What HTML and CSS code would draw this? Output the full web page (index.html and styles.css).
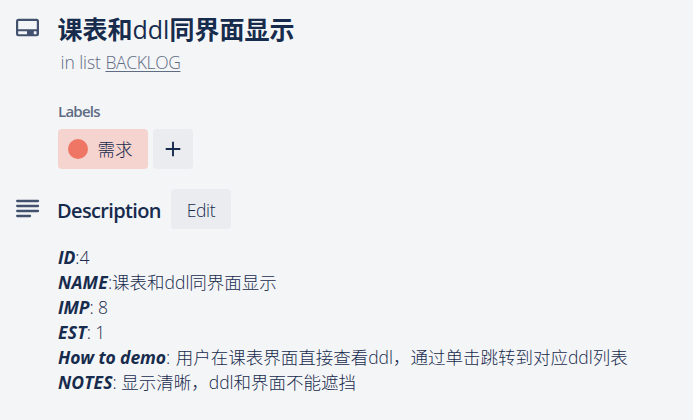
FILE: index.html
```
<!DOCTYPE html>
<html lang="zh-CN">
<head>
<meta charset="utf-8">
<title>课表和ddl同界面显示</title>
<link rel="stylesheet" href="styles.css">
</head>
<body>
<main class="card">
  <header class="card-header">
    <svg class="icon" width="24" height="20" viewBox="0 0 24 20"><path fill="#42526e" fill-rule="evenodd" d="M2.500 0.800h18a2.500 2.500 0 0 1 2.500 2.500v12.500a2.500 2.500 0 0 1-2.500 2.500H2.500a2.500 2.500 0 0 1-2.500-2.500V3.300A2.500 2.500 0 0 1 2.500 .8zM2.200 3v8.300h18.600V3zM2.200 13.200v3h8.800v-3zM17.800 13.200v3h2.700v-3z"/></svg>
    <div class="heading">
      <h1 class="title">课表和<span class="title-latin">ddl</span>同界面显示</h1>
      <p class="list-name"><span>in list</span> <a class="list-link">BACKLOG</a></p>
    </div>
  </header>
  <section class="labels">
    <h2 class="labels-title"><span>Labels</span></h2>
    <div class="label-row">
      <span class="label"><i class="dot"></i>需求</span>
      <button class="add"><svg width="16" height="16" viewBox="0 0 16 16"><path d="M8 .7v14.600M.7 8h14.600" fill="none" stroke="#172b4d" stroke-width="1.900"/></svg></button>
    </div>
  </section>
  <section class="description">
    <div class="description-header">
      <svg class="icon" width="24" height="20" viewBox="0 0 24 20"><path d="M1.200 2h20.800M1.200 7h20.800M1.200 12h20.800M1.200 17h12.800" fill="none" stroke="#42526e" stroke-width="2.300" stroke-linecap="round"/></svg>
      <h2 class="description-title"><span>Description</span></h2>
      <button class="edit"><span>Edit</span></button>
    </div>
    <div class="text">
      <p><b class="k-id">ID</b>:4</p>
      <p><b class="k-name">NAME</b>:课表和<span class="ddl">ddl</span>同界面显示</p>
      <p><b class="k-imp">IMP</b>: 8</p>
      <p><b class="k-est">EST</b>: 1</p>
      <p><b class="k-demo">How to demo</b>: <span class="wide">用户在课表界面直接查看<span class="ddl">ddl</span>，通过单击跳转到对应<span class="ddl">ddl</span>列表</span></p>
      <p><b class="k-notes">NOTES</b>: 显示清晰，<span class="ddl">ddl</span>和界面不能遮挡</p>
    </div>
  </section>
</main>
</body>
</html>
```
FILE: styles.css
```
* { box-sizing: border-box; }
body {
  margin: 0;
  background: #f4f5f7;
  color: #172b4d;
  font: 300 17.5px/25px "Open Sans", "Noto Sans CJK SC", sans-serif;
}
h1, h2, p { margin: 0; }
button { border: 0; padding: 0; font: inherit; color: inherit; }
.card { height: 420px; overflow: hidden; padding: 14px 16px 0 16px; white-space: nowrap; }
.card-header { display: flex; height: 87px; }
.icon { flex: none; display: block; }
.card-header .icon { margin-top: 4px; }
.heading { margin-left: 17.5px; }
.title { font-size: 25px; line-height: 30px; font-weight: 700; }
.title-latin { font-weight: 400; }
.list-name { margin: 6px 0 0 3px; color: #5e6c84; letter-spacing: -0.05px; }
.list-link { text-decoration: underline; text-underline-offset: 2px; text-decoration-thickness: 1px; letter-spacing: -0.35px; }
.labels { margin-left: 42px; height: 88px; }
.labels-title { font-size: 15px; line-height: 20px; font-weight: 600; color: #5e6c84; letter-spacing: -0.75px; }
.label-row { display: flex; gap: 5px; margin-top: 8px; }
.label { display: flex; align-items: center; width: 90px; height: 40px; padding-left: 10px; border-radius: 4px; background: #f5d3ce; }
.dot { width: 20px; height: 20px; margin-right: 9.5px; border-radius: 50%; background: #ef7564; }
.add { display: grid; place-items: center; width: 40px; height: 40px; border-radius: 4px; background: #ebecf0; }
.description-header { display: flex; align-items: center; height: 40px; }
.description-title { width: 104px; margin: 3px 10px 0 17px; font-size: 20px; line-height: 25px; font-weight: 600; letter-spacing: -0.65px; }
.edit { width: 60px; height: 40px; padding-top: 3px; border-radius: 4px; background: #ebecf0; letter-spacing: -0.3px; }
.text { margin: 16px 0 0 42px; }
.text p { height: 25px; }
.text b { font-weight: 700; font-style: italic; }
.k-id { letter-spacing: -0.1px; }
.k-name { letter-spacing: 0.2px; }
.k-imp { letter-spacing: -0.1px; }
.k-est { letter-spacing: 0.2px; }
.k-demo { letter-spacing: -0.1px; }
.k-notes { letter-spacing: 0.1px; }
.wide { margin-left: 1px; }
.ddl { letter-spacing: 0; }
```
